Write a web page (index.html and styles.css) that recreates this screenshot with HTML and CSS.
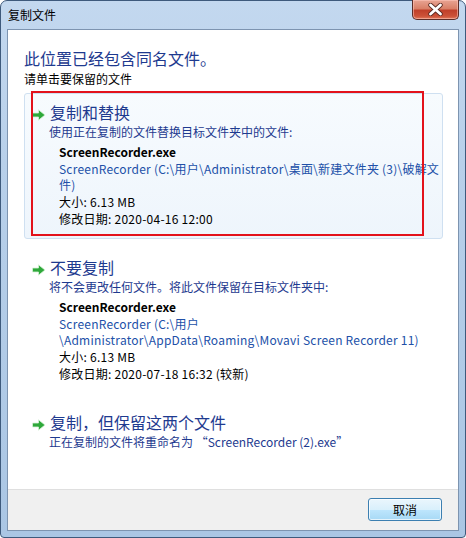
FILE: index.html
```html
<!DOCTYPE html>
<html lang="zh-CN">
<head>
<meta charset="utf-8">
<title>复制文件</title>
<link rel="stylesheet" href="styles.css">
</head>
<body>
<div class="window">
  <div class="titlebar">
    <span class="title">复制文件</span>
    <span class="close">
      <svg width="17" height="13" viewBox="0 0 17 13">
        <path d="M3.5 2 L13.5 11 M13.5 2 L3.5 11" stroke="#5a2a22" stroke-width="4.4" stroke-linecap="round"/>
        <path d="M3.5 2 L13.5 11 M13.5 2 L3.5 11" stroke="#ffffff" stroke-width="2.8" stroke-linecap="round"/>
      </svg>
    </span>
  </div>
  <div class="client">
    <div class="content">
      <div class="heading">此位置已经包含同名文件。</div>
      <div class="prompt">请单击要保留的文件</div>

      <div class="option hover">
        <div class="mark"></div>
        <div class="opt-title">
          <svg class="arrow" width="14" height="12" viewBox="0 0 14 12"><path d="M0.5 4 H6.5 V0.8 L13 6 L6.5 11.2 V8 H0.5 Z" fill="#2ea83a" stroke="#d9f2d9" stroke-width="0.8"/></svg>
          <span>复制和替换</span>
        </div>
        <div class="opt-sub">使用正在复制的文件替换目标文件夹中的文件:</div>
        <div class="details">
          <div class="fname">ScreenRecorder.exe</div>
          <div class="path">ScreenRecorder (C:\用户\Administrator\桌面\新建文件夹 (3)\破解文<br>件)</div>
          <div class="line">大小: 6.13 MB</div>
          <div class="line">修改日期: 2020-04-16 12:00</div>
        </div>
      </div>

      <div class="option">
        <div class="opt-title">
          <svg class="arrow" width="14" height="12" viewBox="0 0 14 12"><path d="M0.5 4 H6.5 V0.8 L13 6 L6.5 11.2 V8 H0.5 Z" fill="#2ea83a" stroke="#d9f2d9" stroke-width="0.8"/></svg>
          <span>不要复制</span>
        </div>
        <div class="opt-sub">将不会更改任何文件。将此文件保留在目标文件夹中:</div>
        <div class="details">
          <div class="fname">ScreenRecorder.exe</div>
          <div class="path">ScreenRecorder (C:\用户<br>\Administrator\AppData\Roaming\Movavi Screen Recorder 11)</div>
          <div class="line">大小: 6.13 MB</div>
          <div class="line">修改日期: 2020-07-18 16:32 (较新)</div>
        </div>
      </div>

      <div class="option">
        <div class="opt-title">
          <svg class="arrow" width="14" height="12" viewBox="0 0 14 12"><path d="M0.5 4 H6.5 V0.8 L13 6 L6.5 11.2 V8 H0.5 Z" fill="#2ea83a" stroke="#d9f2d9" stroke-width="0.8"/></svg>
          <span>复制，但保留这两个文件</span>
        </div>
        <div class="opt-sub">正在复制的文件将重命名为 “ScreenRecorder (2).exe”</div>
      </div>
    </div>
    <div class="footer">
      <button class="btn">取消</button>
    </div>
  </div>
</div>
</body>
</html>
```
FILE: styles.css
```css
* { box-sizing: border-box; }
html, body { margin: 0; padding: 0; }
body {
  width: 466px;
  height: 538px;
  background: #ffffff;
  font-family: "Noto Sans CJK SC", "Noto Sans", sans-serif;
  font-size: 12px;
  color: #000;
}
.window {
  width: 466px;
  height: 538px;
  border: 1px solid #3e5a7c;
  border-radius: 7px 7px 4px 4px;
  background: linear-gradient(180deg, #c3d8ef 0%, #b8d0ea 30%, #aac6e4 100%);
  padding: 0 6px 6px 6px;
  display: flex;
  flex-direction: column;
}
.titlebar {
  height: 28px;
  display: flex;
  justify-content: space-between;
  align-items: flex-start;
}
.title {
  padding-top: 6px;
  padding-left: 1px;
  font-size: 12px;
  line-height: 16px;
  color: #000;
}
.close {
  margin-top: -1px;
  width: 47px;
  height: 20px;
  border: 1px solid #5b2d28;
  border-top: none;
  border-radius: 0 0 5px 5px;
  background: linear-gradient(180deg, #e8a493 0%, #d98068 45%, #c0402a 55%, #cc5238 85%, #e07a5c 100%);
  box-shadow: inset 0 0 0 1px rgba(255,200,190,0.55);
  display: flex;
  align-items: center;
  justify-content: center;
}
.close svg { display: block; }
.client {
  flex: 1;
  border: 1px solid #7d94b0;
  background: #ffffff;
  display: flex;
  flex-direction: column;
}
.content {
  flex: 1;
  padding: 17px 15px 0 16px;
}
.heading {
  font-size: 16px;
  line-height: 22px;
  color: #1e3a8f;
}
.prompt {
  margin-top: 1px;
  line-height: 18px;
}
.option {
  position: relative;
  margin-top: 5px;
  padding: 8px 2px 11px 6px;
  border: 1px solid transparent;
  border-radius: 3px;
}
.option + .option { margin-top: 9px; }
.option.hover {
  border-color: #cfe0f1;
  background: linear-gradient(180deg, #f7fbfe 0%, #eef5fc 100%);
}
.mark {
  position: absolute;
  left: 6px;
  top: -3px;
  width: 393px;
  height: 145px;
  border: 2px solid #e3121b;
}
.opt-title {
  display: flex;
  align-items: center;
  height: 20px;
  font-size: 16px;
  color: #1e3a8f;
}
.arrow {
  margin: 5px 4px 0 1px;
  flex: none;
}
.opt-sub {
  padding-left: 18px;
  line-height: 20px;
  color: #1e3a8f;
}
.details {
  padding-left: 28px;
  margin-top: 1px;
}
.fname {
  font-weight: bold;
  line-height: 18px;
}
.path {
  color: #2150a8;
  line-height: 16px;
  letter-spacing: 0.22px;
  white-space: nowrap;
}
.line {
  line-height: 17px;
  letter-spacing: 0.25px;
}
.footer {
  height: 41px;
  border-top: 1px solid #dfdfdf;
  background: #f0f0f0;
  display: flex;
  justify-content: flex-end;
  align-items: flex-start;
  padding: 8px 16px 0 0;
}
.btn {
  width: 74px;
  height: 23px;
  font-family: inherit;
  font-size: 12px;
  color: #000;
  border: 1px solid #3c7fb1;
  border-radius: 3px;
  background: linear-gradient(180deg, #eaf6fd 0%, #d9f0fc 50%, #bee6fd 51%, #a7d9f5 100%);
  box-shadow: inset 0 0 0 1px rgba(255,255,255,0.7);
  padding: 0;
  line-height: 20px;
}
```
